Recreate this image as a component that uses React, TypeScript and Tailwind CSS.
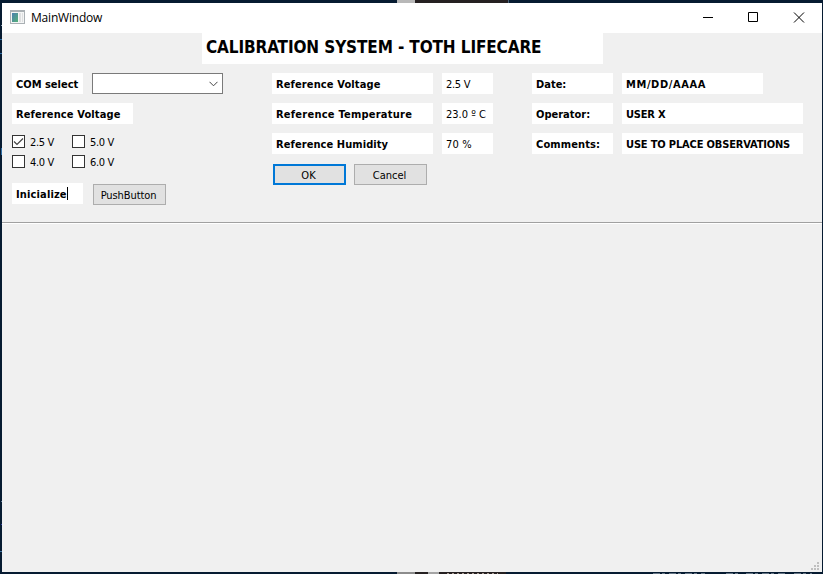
import React from "react";

const bold = "font-['DejaVu_Sans','Noto_Sans',sans-serif] font-bold text-[11px] [font-stretch:condensed]";
const regular = "font-['DejaVu_Sans','Noto_Sans',sans-serif] text-[11px] [font-stretch:condensed]";

function Label({ text, box, track = "", strong = true, caret = false }: { text: string; box: string; track?: string; strong?: boolean; caret?: boolean }) {
  return (
    <div className={`flex h-[21px] shrink-0 items-center bg-white pl-1 whitespace-nowrap ${strong ? bold : regular} ${box}`}>
      <span className={`pt-[2px] leading-[19px] ${track}`}>{text}</span>
      {caret && <span className="h-[13px] w-px bg-black" />}
    </div>
  );
}

function Check({ text, checked = false }: { text: string; checked?: boolean }) {
  return (
    <label className={`flex h-5 w-[60px] items-center ${regular}`}>
      <span className="block h-[13px] w-[13px] border border-[#333] bg-white">
        {checked && (
          <svg width="11" height="11" viewBox="0 0 11 11" fill="none" stroke="#444" strokeWidth="1.2">
            <path d="M1 5.5 4 8.5 10 2.5" />
          </svg>
        )}
      </span>
      <span className="ml-[5px] pt-[4px] leading-[16px] tracking-[-0.32px] whitespace-nowrap">{text}</span>
    </label>
  );
}

function Button({ text, primary = false, track = "" }: { text: string; primary?: boolean; track?: string }) {
  return (
    <button className={`flex h-[21px] w-[73px] items-center justify-center bg-[#e1e1e1] pr-[2px] ${regular} ${primary ? "border-2 border-[#0078d7]" : "border border-[#adadad]"}`}>
      <span className={`pt-[2px] leading-[15px] whitespace-nowrap ${track}`}>{text}</span>
    </button>
  );
}

export default function App() {
  return (
    <div className="h-[574px] w-[823px] overflow-hidden bg-[#061b31] text-black">
      <div className="flex h-[3px] pl-[397px]">
        <span className="h-[3px] w-[18px] bg-[#b8b8b8]" />
        <span className="h-[3px] w-[93px] bg-[#252021]" />
        <span className="h-[3px] w-px bg-[#4a6176]" />
      </div>
      <div className="flex">
        <div className="flex h-[569px] w-[2px] shrink-0 flex-col items-end">
          <span className="mt-[22px] h-px w-px bg-[#8fa4b8]" />
          <span className="mt-[13px] h-px w-[2px] bg-[#2d6da5]" />
          <span className="mt-[13px] h-px w-[2px] bg-[#2d6da5]" />
          <span className="mt-[94px] h-[7px] w-px bg-[#2d6da5]" />
          <span className="mt-[346px] h-px w-px bg-[#6683a0]" />
          <span className="mt-[22px] h-px w-px bg-[#3d45b0]" />
          <span className="mt-[26px] h-px w-[2px] bg-[#4076a5]" />
        </div>
        <div className="flex h-[569px] w-[820px] flex-col bg-[#f0f0f0]">
          <header className="flex h-[30px] shrink-0 bg-white">
            <svg className="mt-[7px] ml-2 shrink-0" width="15" height="14" viewBox="0 0 15 14">
              <defs>
                <linearGradient id="pane" x1="0" y1="0" x2="1" y2="1">
                  <stop offset="0" stopColor="#4b7fb0" />
                  <stop offset="1" stopColor="#55b078" />
                </linearGradient>
              </defs>
              <path fill="#aab0b4" d="M0 0h15v14H0z" />
              <path fill="#f4f5f5" d="M1 2h13v11H1z" />
              <path fill="url(#pane)" d="M2 3h6v9H2z" />
              <path fill="#dedfe0" d="M9 3h2v9H9zM12 3h1v9h-1z" />
            </svg>
            <span className="ml-[6px] flex-1 font-['Open_Sans',sans-serif] text-[12px] leading-[29px] tracking-[-0.2px]">MainWindow</span>
            <svg className="shrink-0" width="120" height="30" viewBox="0 0 120 30" fill="none" stroke="#000">
              <path d="M1 14.5h10M46.5 9.5h9v9h-9zM92 9.5l10 10M102 9.5l-10 10" />
            </svg>
          </header>
          <div className="ml-[200px] flex h-[31px] w-[401px] shrink-0 items-center bg-white pb-px pl-1 font-['DejaVu_Sans','Noto_Sans',sans-serif] text-[17px] font-bold tracking-[-0.12px] whitespace-nowrap [font-stretch:condensed]">
            CALIBRATION SYSTEM - TOTH LIFECARE
          </div>
          <div className="flex h-[158px] shrink-0 pt-[9px] pl-[10px]">
            <section className="flex w-[260px] flex-col">
              <div className="flex gap-[9px]">
                <Label text="COM select" box="w-[71px]" />
                <div className="flex h-[21px] w-[131px] items-center justify-end border border-[#7a7a7a] bg-white pr-1">
                  <svg width="9" height="6" viewBox="0 0 9 6" fill="none" stroke="#444"><path d="M.5.8 4.5 4.8 8.5.8" /></svg>
                </div>
              </div>
              <div className="mt-[9px] flex"><Label text="Reference Voltage" box="w-[121px]" track="tracking-[0.12px]" /></div>
              <div className="mt-[7px] grid w-[120px] grid-cols-2">
                <Check text="2.5 V" checked />
                <Check text="5.0 V" />
                <Check text="4.0 V" />
                <Check text="6.0 V" />
              </div>
              <div className="mt-[12px] flex gap-[10px]">
                <Label text="Inicialize" box="w-[71px]" track="tracking-[0.14px]" caret />
                <div className="pt-px"><Button text="PushButton" track="tracking-[-0.1px]" /></div>
              </div>
            </section>
            <section className="flex w-[260px] flex-col gap-[9px]">
              <div className="flex gap-[9px]"><Label text="Reference Voltage" box="w-[161px]" track="tracking-[0.12px]" /><Label text="2.5 V" strong={false} box="w-[51px]" track="tracking-[-0.3px]" /></div>
              <div className="flex gap-[9px]"><Label text="Reference Temperature" box="w-[161px]" track="tracking-[0.24px]" /><Label text="23.0 º C" strong={false} box="w-[51px]" /></div>
              <div className="flex gap-[9px]"><Label text="Reference Humidity" box="w-[161px]" track="tracking-[0.08px]" /><Label text="70 %" strong={false} box="w-[51px]" track="tracking-[0.2px]" /></div>
              <div className="mt-px flex gap-2 pl-px"><Button text="OK" primary /><Button text="Cancel" /></div>
            </section>
            <section className="flex flex-col gap-[9px]">
              <div className="flex gap-[9px]"><Label text="Date:" box="w-[81px]" /><Label text="MM/DD/AAAA" box="w-[141px]" track="tracking-[0.6px]" /></div>
              <div className="flex gap-[9px]"><Label text="Operator:" box="w-[81px]" /><Label text="USER X" box="w-[181px]" track="tracking-[-0.2px]" /></div>
              <div className="flex gap-[9px]"><Label text="Comments:" box="w-[81px]" track="tracking-[0.12px]" /><Label text="USE TO PLACE OBSERVATIONS" box="w-[181px]" track="tracking-[-0.16px]" /></div>
            </section>
          </div>
          <hr className="h-[2px] shrink-0 border-t border-b border-t-[#a0a0a0] border-b-white" />
          <div className="flex flex-1 items-end justify-end pr-[3px] pb-[2px]">
            <svg width="8" height="8" viewBox="0 0 8 8" fill="#bfbfbf">
              <path d="M6 0h2v2H6zM3 3h2v2H3zM6 3h2v2H6zM0 6h2v2H0zM3 6h2v2H3zM6 6h2v2H6z" />
            </svg>
          </div>
        </div>
      </div>
      <div className="flex h-[2px] pl-[397px]">
        <span className="w-[18px] bg-[#8c8c8c]" />
        <span className="w-[13px] bg-[#252021]" />
        <span className="w-[11px] bg-[#a5a5a5]" />
        <span className="w-[7px] bg-[#252021]" />
        <svg className="shrink-0" width="376" height="2" viewBox="0 0 376 2" fill="none">
          <path stroke="#252021" strokeWidth="2" d="M0 1h60" />
          <path stroke="#a99b94" strokeDasharray="2 3" d="M1 1.5h51" />
          <path stroke="#657585" strokeDasharray="7 2 3 4" d="M207 1.5h52M280 1.5h12M300 1.5h40M348 1.5h18" />
        </svg>
      </div>
    </div>
  );
}
